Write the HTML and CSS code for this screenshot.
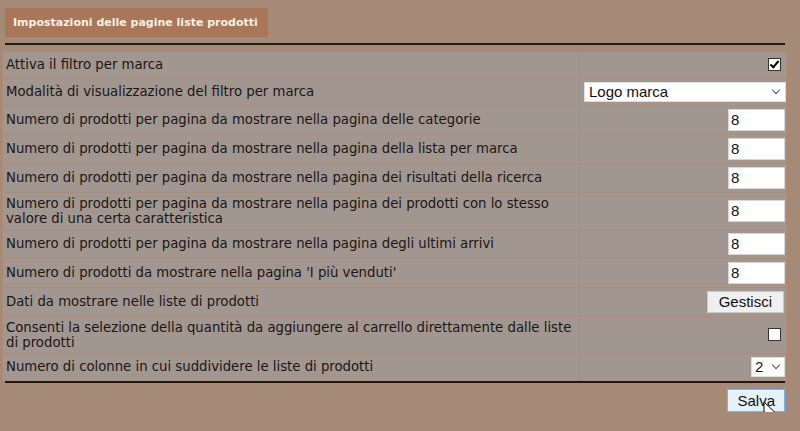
FILE: index.html
```html
<!DOCTYPE html>
<html lang="it">
  <head>
    <meta charset="UTF-8" />
    <meta name="viewport" content="width=device-width, initial-scale=1.0" />
    <title>Impostazioni delle pagine liste prodotti</title>
    <link rel="stylesheet" href="styles.css">
  </head>
  <body>
    <div class="page">
      <div class="title-box">Impostazioni delle pagine liste prodotti</div>
      <hr class="rule" />

      <form class="settings">
        <table class="settings-table">
          <colgroup>
            <col class="col-label" />
            <col class="col-value" />
          </colgroup>
          <tr>
            <td class="label">Attiva il filtro per marca</td>
            <td class="value"><span class="check checked"></span></td>
          </tr>
          <tr>
            <td class="label">Modalità di visualizzazione del filtro per marca</td>
            <td class="value">
              <div class="select wide"><span>Logo marca</span><i class="caret"></i></div>
            </td>
          </tr>
          <tr>
            <td class="label">Numero di prodotti per pagina da mostrare nella pagina delle categorie</td>
            <td class="value"><input type="text" value="8" class="num" /></td>
          </tr>
          <tr>
            <td class="label">Numero di prodotti per pagina da mostrare nella pagina della lista per marca</td>
            <td class="value"><input type="text" value="8" class="num" /></td>
          </tr>
          <tr>
            <td class="label">Numero di prodotti per pagina da mostrare nella pagina dei risultati della ricerca</td>
            <td class="value"><input type="text" value="8" class="num" /></td>
          </tr>
          <tr>
            <td class="label">Numero di prodotti per pagina da mostrare nella pagina dei prodotti con lo stesso valore di una certa caratteristica</td>
            <td class="value"><input type="text" value="8" class="num" /></td>
          </tr>
          <tr>
            <td class="label">Numero di prodotti per pagina da mostrare nella pagina degli ultimi arrivi</td>
            <td class="value"><input type="text" value="8" class="num" /></td>
          </tr>
          <tr>
            <td class="label">Numero di prodotti da mostrare nella pagina 'I più venduti'</td>
            <td class="value"><input type="text" value="8" class="num" /></td>
          </tr>
          <tr>
            <td class="label">Dati da mostrare nelle liste di prodotti</td>
            <td class="value"><button type="button" class="btn">Gestisci</button></td>
          </tr>
          <tr>
            <td class="label">Consenti la selezione della quantità da aggiungere al carrello direttamente dalle liste di prodotti</td>
            <td class="value"><span class="check"></span></td>
          </tr>
          <tr>
            <td class="label">Numero di colonne in cui suddividere le liste di prodotti</td>
            <td class="value">
              <div class="select small"><span>2</span><i class="caret"></i></div>
            </td>
          </tr>
        </table>
        <hr class="rule bottom" />

        <div class="actions">
          <button type="submit" class="btn save">Salva</button>
          <svg class="cursor" width="14" height="22" viewBox="0 0 14 22">
            <path d="M1 1 L1 16 L4.5 12.5 L7.5 19.5 L10 18.5 L7 11.5 L12 11.5 Z" fill="#fff" stroke="#000" stroke-width="1" />
          </svg>
        </div>
      </form>
    </div>
  </body>
</html>
```

FILE: styles.css
```css
* {
  box-sizing: border-box;
}

body {
  margin: 0;
  background-color: #a58a78;
  font-family: "DejaVu Sans", Verdana, sans-serif;
  font-size: 13.25px;
  color: #1c1714;
}

.page {
  padding: 8px 14px 0 2px;
}

.title-box {
  margin-left: 3px;
  background-color: #a97757;
  color: #f7efe6;
  font-weight: bold;
  font-size: 11px;
  line-height: 15px;
  padding: 7px 8px;
  height: 29px;
  width: 263px;
  white-space: nowrap;
}

.rule {
  margin: 6px 0 7px 3px;
  border: none;
  border-top: 2px solid #1e1a17;
  width: 780px;
}

.rule.bottom {
  margin: 0 0 0 3px;
}

.settings-table {
  width: 785px;
  table-layout: fixed;
  border-collapse: collapse;
  background-color: #a29690;
}

.col-label {
  width: 577px;
}

.settings-table td {
  border: 1px solid #b08a73;
  padding: 3px 1px 3px 4px;
  height: 26px;
  line-height: 15px;
  vertical-align: middle;
}

.settings-table td.label {
  padding: 3px 0 3px 3px;
}

.settings-table tr:first-child td {
  border-top: none;
}

.value {
  text-align: right;
  font-size: 0;
}

.num {
  width: 57px;
  height: 22px;
  border: 1px solid #d6d6d6;
  background: #fff;
  font-family: "Liberation Sans", Arial, sans-serif;
  font-size: 15px;
  padding: 1px 2px;
  color: #111;
  vertical-align: middle;
}

.check {
  display: inline-block;
  width: 13px;
  height: 13px;
  border: 1px solid #333;
  background: #fff;
  vertical-align: middle;
  margin-right: 4px;
  position: relative;
}

.check.checked::after {
  content: "";
  position: absolute;
  left: 3px;
  top: 0;
  width: 3px;
  height: 7px;
  border: solid #000;
  border-width: 0 2px 2px 0;
  transform: rotate(40deg);
}

.select {
  display: inline-flex;
  align-items: center;
  justify-content: space-between;
  background: #fff;
  border: 1px solid #ddd;
  height: 20px;
  font-family: "Liberation Sans", Arial, sans-serif;
  font-size: 15px;
  color: #111;
  padding: 0 6px 0 4px;
  vertical-align: middle;
}

.select.wide {
  width: 202px;
}

.select.small {
  width: 34px;
  padding: 0 5px 0 3px;
}

.caret {
  width: 6px;
  height: 6px;
  border: solid #555;
  border-width: 0 1.5px 1.5px 0;
  transform: rotate(45deg);
  margin-top: -4px;
}

.btn {
  font-family: "Liberation Sans", Arial, sans-serif;
  font-size: 15px;
  color: #111;
  background: #efefef;
  border: 1px solid #c8c8c8;
  height: 22px;
  padding: 0 11px;
  margin-right: 1px;
  vertical-align: middle;
}

.actions {
  position: relative;
  text-align: right;
  padding: 6px 4px 0 0;
  width: 788px;
}

.btn.save {
  height: 23px;
  background: #e5f1fb;
  border: 1px solid #7eb4ea;
  padding: 0 9px;
}

.cursor {
  position: absolute;
  right: 13px;
  top: 18px;
}
```
